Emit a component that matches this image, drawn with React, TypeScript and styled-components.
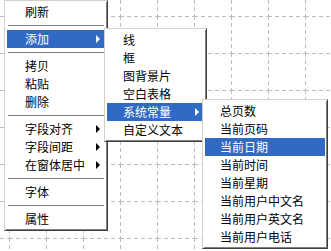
import { HTMLAttributes } from "react";
import styled, { createGlobalStyle } from "styled-components";

type Entry = { label: string; sub?: boolean; active?: boolean } | "sep";

const mainItems: Entry[] = [
  { label: "刷新" },
  "sep",
  { label: "添加", sub: true, active: true },
  "sep",
  { label: "拷贝" },
  { label: "粘贴" },
  { label: "删除" },
  "sep",
  { label: "字段对齐", sub: true },
  { label: "字段间距", sub: true },
  { label: "在窗体居中", sub: true },
  "sep",
  { label: "字体" },
  "sep",
  { label: "属性" },
];

const addItems: Entry[] = [
  { label: "线" },
  { label: "框" },
  { label: "图背景片" },
  { label: "空白表格" },
  { label: "系统常量", sub: true, active: true },
  { label: "自定义文本" },
];

const constItems: Entry[] = [
  { label: "总页数" },
  { label: "当前页码" },
  { label: "当前日期", active: true },
  { label: "当前时间" },
  { label: "当前星期" },
  { label: "当前用户中文名" },
  { label: "当前用户英文名" },
  { label: "当前用户电话" },
];

interface PopupMenuProps extends HTMLAttributes<HTMLElement> {
  items: Entry[];
  left: number;
  top: number;
  width: number;
  textIndent: number;
}

const PopupMenu = ({ items, left, top, width, textIndent }: PopupMenuProps) => (
  <MenuBox $left={left} $top={top} $width={width}>
    {items.map((item, i) =>
      item === "sep" ? (
        <Separator key={i} />
      ) : (
        <MenuRow key={i} $active={!!item.active} $indent={textIndent}>
          {item.label}
          {item.sub && <Arrow $active={!!item.active} />}
        </MenuRow>
      )
    )}
  </MenuBox>
);

const GridLines = () => (
  <GridSvg width="331" height="251">
    <defs>
      <pattern id="grid" x="9" y="16" width="37" height="37" patternUnits="userSpaceOnUse">
        <line x1="0.5" y1="0" x2="0.5" y2="37" stroke="#bdbdbd" strokeDasharray="4 3" />
        <line x1="0" y1="0.5" x2="37" y2="0.5" stroke="#bdbdbd" strokeDasharray="4 3" />
      </pattern>
    </defs>
    <rect width="331" height="251" fill="url(#grid)" />
  </GridSvg>
);

const App = () => (
  <>
    <GlobalStyle />
    <Canvas>
      <GridLines />
      <PopupMenu items={mainItems} left={4} top={0} width={104} textIndent={18} />
      <PopupMenu items={addItems} left={104} top={28} width={103} textIndent={16} />
      <PopupMenu items={constItems} left={202} top={99} width={126} textIndent={15} />
    </Canvas>
  </>
);

const GlobalStyle = createGlobalStyle`
  html, body {
    margin: 0;
    padding: 0;
    background: #fff;
  }
  body {
    font-family: "Noto Sans CJK SC", "Liberation Sans", sans-serif;
  }
`;

const Canvas = styled.div`
  position: relative;
  width: 331px;
  height: 251px;
  overflow: hidden;
  background: #fff;
`;

const GridSvg = styled.svg`
  position: absolute;
  left: 0;
  top: 0;
`;

const MenuBox = styled.div<{ $left: number; $top: number; $width: number }>`
  position: absolute;
  left: ${(p) => p.$left}px;
  top: ${(p) => p.$top}px;
  width: ${(p) => p.$width}px;
  box-sizing: border-box;
  padding: 2px;
  display: flex;
  flex-direction: column;
  background: #fff;
  border: 1px solid;
  border-color: #d4d0c8 #404040 #404040 #d4d0c8;
  box-shadow: inset 1px 1px #fff, inset -1px -1px #808080;
`;

const MenuRow = styled.div<{ $active: boolean; $indent: number }>`
  height: 18px;
  display: flex;
  align-items: center;
  padding-left: ${(p) => p.$indent}px;
  font-size: 12px;
  line-height: 18px;
  white-space: nowrap;
  color: ${(p) => (p.$active ? "#fff" : "#000")};
  background: ${(p) => (p.$active ? "#316ac5" : "transparent")};
`;

const Arrow = styled.span<{ $active: boolean }>`
  margin-left: auto;
  margin-right: 5px;
  width: 0;
  height: 0;
  border-top: 4px solid transparent;
  border-bottom: 4px solid transparent;
  border-left: 4px solid ${(p) => (p.$active ? "#fff" : "#000")};
`;

const Separator = styled.div`
  height: 9px;
  display: flex;
  align-items: center;
  padding: 0 1px;

  &::after {
    content: "";
    flex: 1;
    border-top: 1px solid #808080;
    border-bottom: 1px solid #fff;
  }
`;

export default App;
